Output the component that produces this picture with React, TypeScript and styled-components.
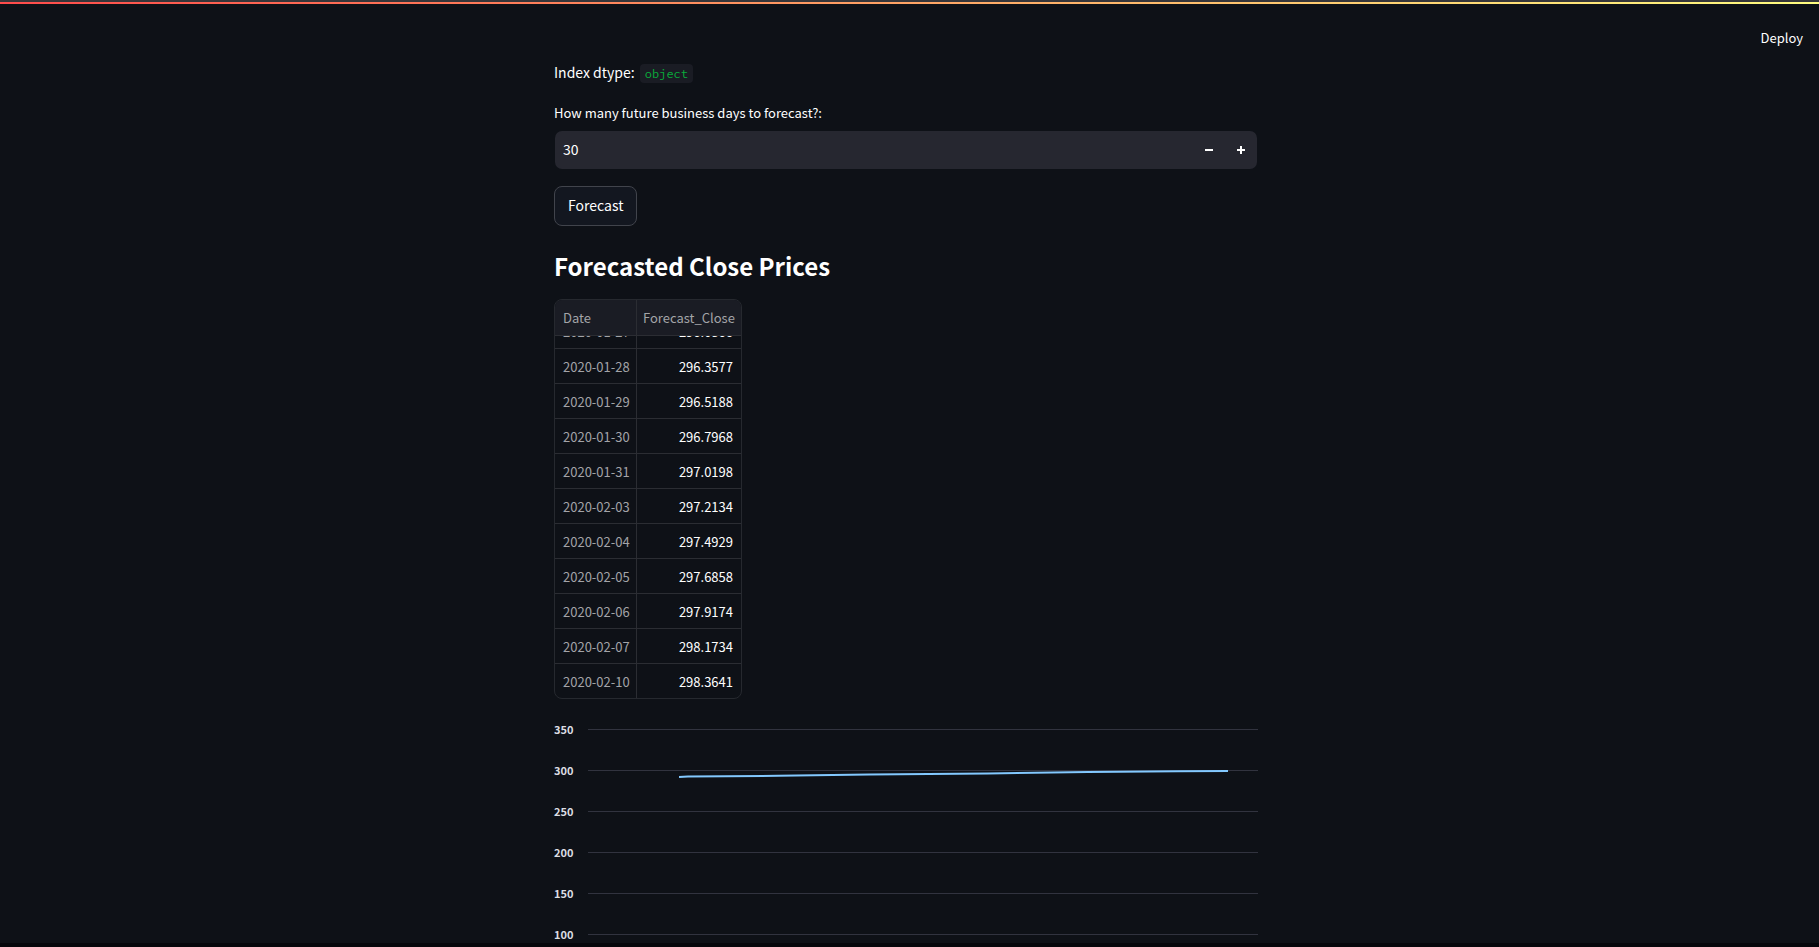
import React, { useEffect, useRef, useState } from "react";
import styled, { createGlobalStyle } from "styled-components";

const GlobalStyle = createGlobalStyle`
  *, *::before, *::after { box-sizing: border-box; }
  body {
    margin: 0;
    background: #0e1117;
    color: #ffffff;
    font-family: "Source Sans Pro", "Noto Sans CJK SC", sans-serif;
    font-size: 14px;
    line-height: 24px;
  }
  button, input { font: inherit; color: inherit; }
`;

const Page = styled.div`
  position: relative;
  height: 100vh;
  overflow: hidden;
  border-top: 2px solid #36363a;
  border-bottom: 4px solid #06070c;
`;

const Decoration = styled.div`
  height: 2px;
  background: linear-gradient(90deg, #ff4b4b, #fffd80);
`;

const Toolbar = styled.header`
  position: absolute;
  top: 2px;
  right: 0;
  display: flex;
  align-items: center;
  height: 68px;
  padding-right: 8px;
`;

const DeployButton = styled.button`
  border: 0;
  background: transparent;
  padding: 4px 8px;
  font-size: 13px;
  line-height: 20px;
`;

const Main = styled.main`
  display: flex;
  justify-content: center;
  padding: 56px 7px 0 0;
`;

const Column = styled.div`
  display: flex;
  flex-direction: column;
  align-items: flex-start;
  gap: 16px;
  width: 100%;
  max-width: 704px;
`;

const Paragraph = styled.p`
  height: 24px;
  margin: 0 0 3px;
`;

const Code = styled.code`
  display: inline-block;
  margin-left: 2px;
  padding: 0 5px;
  border-radius: 4px;
  background: #1a1c24;
  color: #09ab3b;
  font: 12px/19px "Source Code Pro", "DejaVu Sans Mono", monospace;
`;

const Field = styled.div`
  display: flex;
  flex-direction: column;
  gap: 7px;
  width: 100%;
`;

const FieldLabel = styled.label`
  font-size: 13px;
  line-height: 20px;
`;

const NumberBox = styled.div`
  display: flex;
  height: 40px;
  border: 1px solid transparent;
  border-radius: 8px;
  background: #262730;
  background-clip: padding-box;
  overflow: hidden;
`;

const NumberInput = styled.input`
  flex: 1;
  min-width: 0;
  padding: 0 8px 2px;
  border: 0;
  outline: 0;
  background: transparent;
`;

const StepButton = styled.button`
  display: flex;
  align-items: center;
  justify-content: center;
  width: 32px;
  padding: 0;
  border: 0;
  background: transparent;
`;

const ForecastButton = styled.button`
  height: 40px;
  padding: 0 13px 2px;
  border: 1px solid #41444c;
  border-radius: 8px;
  background: #131720;
`;

const Heading = styled.h3`
  margin: 0;
  padding: 8px 0 1px;
  font-size: 24px;
  font-weight: 600;
  line-height: 32px;
`;

const TableFrame = styled.div`
  height: 400px;
  border: 1px solid #26292f;
  border-radius: 8px;
  overflow-x: hidden;
  overflow-y: auto;
  scrollbar-width: none;
`;

const Table = styled.table`
  width: 186px;
  table-layout: fixed;
  border-collapse: separate;
  border-spacing: 0;
  font-size: 13px;
  line-height: 20px;
  white-space: nowrap;
`;

const HeadCell = styled.th<{ $wide?: boolean }>`
  position: sticky;
  top: 0;
  width: ${(p) => (p.$wide ? 104 : 82)}px;
  height: 36px;
  padding: 0 ${(p) => (p.$wide ? 6 : 8)}px;
  border-bottom: 1px solid #2b2d33;
  border-right: ${(p) => (p.$wide ? 0 : 1)}px solid #2b2d33;
  background: #1a1c24;
  color: #a3a4a8;
  font-weight: 400;
  text-align: left;
`;

const Cell = styled.td<{ $value?: boolean }>`
  height: 35px;
  padding: 1px 8px 0;
  border-bottom: 1px solid #2b2d33;
  border-right: ${(p) => (p.$value ? 0 : 1)}px solid #2b2d33;
  color: ${(p) => (p.$value ? "#ffffff" : "#a3a4a8")};
  text-align: ${(p) => (p.$value ? "right" : "left")};
  tr:last-child > & { height: 34px; border-bottom: 0; }
`;

const Chart = styled.figure`
  display: flex;
  gap: 15px;
  width: 100%;
  margin: 0;
  padding-top: 4px;
`;

const Axis = styled.div`
  width: 19px;
  color: #dcdde3;
  font-size: 11px;
  font-weight: 700;
  line-height: 20px;
`;

const Tick = styled.div`
  height: 41px;
`;

const Plot = styled.div`
  flex: 1;
  padding-top: 10px;
`;

const PlotSvg = styled.svg`
  display: block;
  width: 100%;
  height: 290px;
`;

const rows: [string, string][] = [
  ["2020-01-27", "296.0866"],
  ["2020-01-28", "296.3577"],
  ["2020-01-29", "296.5188"],
  ["2020-01-30", "296.7968"],
  ["2020-01-31", "297.0198"],
  ["2020-02-03", "297.2134"],
  ["2020-02-04", "297.4929"],
  ["2020-02-05", "297.6858"],
  ["2020-02-06", "297.9174"],
  ["2020-02-07", "298.1734"],
  ["2020-02-10", "298.3641"],
];

const ticks = [350, 300, 250, 200, 150, 100];

export default function App() {
  const [days, setDays] = useState(30);
  const frame = useRef<HTMLDivElement>(null);

  useEffect(() => {
    if (frame.current) frame.current.scrollTop = frame.current.scrollHeight;
  }, []);

  return (
    <>
      <GlobalStyle />
      <Page>
        <Decoration />
        <Toolbar>
          <DeployButton type="button">Deploy</DeployButton>
        </Toolbar>
        <Main>
          <Column>
            <Paragraph>
              Index dtype: <Code>object</Code>
            </Paragraph>
            <Field>
              <FieldLabel htmlFor="days">How many future business days to forecast?:</FieldLabel>
              <NumberBox>
                <NumberInput
                  id="days"
                  inputMode="numeric"
                  value={days}
                  onChange={(e) => setDays(Number(e.target.value) || 0)}
                />
                <StepButton type="button" aria-label="Decrease" onClick={() => setDays(days - 1)}>
                  <svg width="8" height="8" viewBox="0 0 8 8">
                    <path d="M0 3h8v2H0z" fill="#ffffff" />
                  </svg>
                </StepButton>
                <StepButton type="button" aria-label="Increase" onClick={() => setDays(days + 1)}>
                  <svg width="8" height="8" viewBox="0 0 8 8">
                    <path d="M3 0h2v3h3v2H5v3H3V5H0V3h3z" fill="#ffffff" />
                  </svg>
                </StepButton>
              </NumberBox>
            </Field>
            <ForecastButton type="button">Forecast</ForecastButton>
            <Heading>Forecasted Close Prices</Heading>
            <TableFrame ref={frame}>
              <Table>
                <thead>
                  <tr>
                    <HeadCell>Date</HeadCell>
                    <HeadCell $wide>Forecast_Close</HeadCell>
                  </tr>
                </thead>
                <tbody>
                  {rows.map(([date, value]) => (
                    <tr key={date}>
                      <Cell>{date}</Cell>
                      <Cell $value>{value}</Cell>
                    </tr>
                  ))}
                </tbody>
              </Table>
            </TableFrame>
            <Chart>
              <Axis>
                {ticks.map((t) => (
                  <Tick key={t}>{t}</Tick>
                ))}
              </Axis>
              <Plot>
                <PlotSvg viewBox="0 0 670 290" preserveAspectRatio="none">
                  {ticks.map((t, i) => (
                    <path key={t} d={`M0 ${i * 41 + 0.5}H670`} stroke="#31333f" />
                  ))}
                  <path
                    d="M91 48L100 47.5L190 46.8L281 45.6L400 44.4L500 43L590 42.2L640 42"
                    fill="none"
                    stroke="#83c9ff"
                    strokeWidth="2"
                  />
                </PlotSvg>
              </Plot>
            </Chart>
          </Column>
        </Main>
      </Page>
    </>
  );
}
